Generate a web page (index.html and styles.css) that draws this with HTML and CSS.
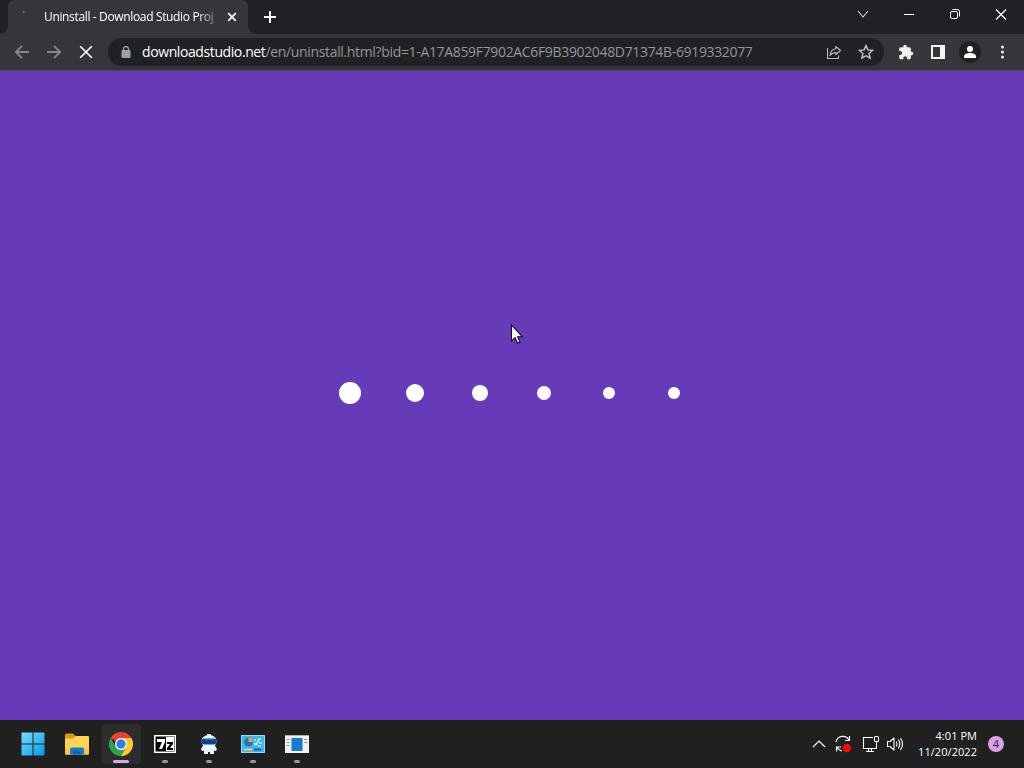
FILE: index.html
```html
<!DOCTYPE html>
<html lang="en">
<head>
  <meta charset="UTF-8">
  <meta name="viewport" content="width=device-width, initial-scale=1.0">
  <title>Uninstall - Download Studio Proj</title>
  <link rel="stylesheet" href="styles.css">
</head>
<body>

  <!-- Tab strip -->
  <div class="tab-strip">
    <div class="tab">
      <svg class="tab-spinner" width="16" height="16" viewBox="0 0 16 16"><path d="M7.3 3.2l1-.5" stroke="#9fa8b5" stroke-width="1.6"/></svg>
      <span class="tab-title">Uninstall - Download Studio Proj</span>
      <svg class="tab-close" width="10" height="10" viewBox="0 0 10 10"><path d="M1.2 1.2l7.6 7.6M8.8 1.2L1.2 8.8" stroke="#fff" stroke-width="1.7"/></svg>
    </div>
    <svg class="new-tab" width="14" height="14" viewBox="0 0 14 14"><path d="M7 1v12M1 7h12" stroke="#fff" stroke-width="2"/></svg>
    <div class="window-buttons">
      <svg width="46" height="28" viewBox="0 0 46 28"><path d="M18 11l5 6 5-6" fill="none" stroke="#ddd" stroke-width="1.1"/></svg>
      <svg width="46" height="28" viewBox="0 0 46 28"><path d="M18 14.5h10" stroke="#fff"/></svg>
      <svg width="46" height="28" viewBox="0 0 46 28" fill="none" stroke="#fff"><rect x="18.5" y="11.5" width="7" height="7" rx="1.5"/><path d="M20.5 9.5h5q2 0 2 2v5"/></svg>
      <svg width="46" height="28" viewBox="0 0 46 28"><path d="M18 9.5l10 10M28 9.5l-10 10" stroke="#fff" stroke-width="1.2"/></svg>
    </div>
  </div>

  <!-- Toolbar -->
  <div class="toolbar">
    <div class="nav-buttons">
      <svg width="16" height="16" viewBox="0 0 16 16"><path d="M15 8H2M8 1.8L1.8 8 8 14.2" fill="none" stroke="#85878a" stroke-width="1.8"/></svg>
      <svg width="16" height="16" viewBox="0 0 16 16"><path d="M1 8h13M8 1.8L14.2 8 8 14.2" fill="none" stroke="#85878a" stroke-width="1.8"/></svg>
      <svg width="16" height="16" viewBox="0 0 16 16"><path d="M2.2 2.2l11.6 11.6M13.8 2.2L2.2 13.8" stroke="#fff" stroke-width="1.6"/></svg>
    </div>
    <div class="address-bar">
      <svg class="lock" width="10" height="12" viewBox="0 0 10 12"><rect x=".5" y="4" width="9" height="8" rx="1.2" fill="#9aa0a6"/><path d="M2.5 5V3a2.5 2.5 0 0 1 5 0v2" fill="none" stroke="#9aa0a6" stroke-width="1.3"/></svg>
      <span class="url"><span class="host">downloadstudio.net</span><span class="path">/en/uninstall.html?bid=1-A17A859F7902AC6F9B3902048D71374B-6919332077</span></span>
      <div class="address-icons">
        <svg width="16" height="16" viewBox="0 0 16 16" fill="none" stroke="#b9bcc0" stroke-width="1.1"><path d="M1.5 4v10.500h11V11.5"/><path d="M9.800 2.500l4.700 4-4.700 4V8.500C7 8.500 5.500 9.500 4 11.500 4.500 7.500 6.500 5 9.800 4.700z" stroke-linejoin="round"/></svg>
        <svg width="16" height="16" viewBox="0 0 16 16"><path d="M8 1.600l1.900 4.300 4.700.5-3.500 3.100 1 4.600L8 11.700l-4.100 2.400 1-4.600L1.400 6.400l4.700-.5z" fill="none" stroke="#c4c7ca" stroke-width="1.400"/></svg>
      </div>
    </div>
    <div class="browser-actions">
      <svg width="18" height="18" viewBox="0 0 24 24"><path d="M19.500 11.500H18.500V7.500a2 2 0 0 0-2-2h-3.500V4.500a2.300 2.300 0 0 0-4.600 0v1H5a2 2 0 0 0-2 2v3.300h1.200a2.600 2.600 0 0 1 0 5.200H3V19.500a2 2 0 0 0 2 2h3.300v-1.200a2.600 2.600 0 0 1 5.200 0v1.200h3a2 2 0 0 0 2-2v-3.300h1a2.350 2.350 0 0 0 0-4.700z" fill="#eff0f1"/></svg>
      <svg width="16" height="16" viewBox="0 0 16 16"><path d="M1 1h14v14H1zM3 3v10h7V3z" fill="#f4f4f5" fill-rule="evenodd"/></svg>
      <span class="avatar"><svg width="14" height="14" viewBox="0 0 14 14" fill="#fff"><circle cx="7" cy="4" r="3"/><path d="M1 13v-1.500C1 9 4 8 7 8s6 1 6 3.500V13z"/></svg></span>
      <svg width="16" height="16" viewBox="0 0 16 16" fill="#eee"><circle cx="8.500" cy="3" r="1.500"/><circle cx="8.500" cy="8" r="1.500"/><circle cx="8.500" cy="13" r="1.500"/></svg>
    </div>
  </div>

  <!-- Page with the loading dots -->
  <div class="page">
    <div class="loader">
      <span class="dot dot-1"></span>
      <span class="dot dot-2"></span>
      <span class="dot dot-3"></span>
      <span class="dot dot-4"></span>
      <span class="dot dot-5"></span>
      <span class="dot dot-6"></span>
    </div>
    <svg class="cursor" width="14" height="21" viewBox="0 0 14 21"><path d="M1.500 1v16l3.600-3.300 2.500 5.600 2.500-1.100-2.500-5.400h4.800z" fill="#fff" stroke="#160a2c" stroke-width="1.100"/></svg>
  </div>

  <!-- Taskbar -->
  <div class="taskbar">
    <div class="apps">
      <div class="app">
        <svg width="24" height="24" viewBox="0 0 24 24">
          <defs><linearGradient id="win" x1="0" y1="0" x2="24" y2="24" gradientUnits="userSpaceOnUse"><stop offset="0" stop-color="#78e0fb"/><stop offset="1" stop-color="#0a94e8"/></linearGradient></defs>
          <path d="M1 .5h10.500V11.500H.5V1zM12.500.5H23l.5.5v10.500h-11zM.5 12.500h11v11H1l-.5-.5zM12.500 12.500h11V23l-.5.5H12.500z" fill="url(#win)"/>
        </svg>
      </div>
      <div class="app">
        <svg width="26" height="24" viewBox="0 0 26 24">
          <path d="M1 3q0-1.500 1.500-1.500H9l3 3v4H1z" fill="#d99a18"/>
          <path d="M1 6.500h8l3-2.500h12q1 0 1 1v16.500q0 1-1 1H2q-1 0-1-1z" fill="#ffd35a"/>
          <path d="M1 16h24v5.500q0 1-1 1H2q-1 0-1-1z" fill="#fbc544"/>
          <path d="M6 22.500v-5q0-2 2-2h10q2 0 2 2v5z" fill="#147bc6"/>
          <path d="M9 19h8v3.500H9z" fill="#0b66ac"/>
        </svg>
      </div>
      <div class="app active">
        <svg width="24" height="24" viewBox="0 0 24 24">
          <path d="M12 12L1.600 6A12 12 0 0 1 22.400 6z" fill="#e54335"/>
          <path d="M12 12L22.400 6A12 12 0 0 1 12 24z" fill="#fcc934"/>
          <path d="M12 6h10.400L17.200 15 12 24z" fill="#fcc934"/>
          <path d="M6.800 15L1.600 6A12 12 0 0 0 12 24l5.200-9-5.200 3z" fill="#2da44e"/>
          <circle cx="12" cy="12" r="6" fill="#fff"/>
          <circle cx="12" cy="12" r="4.700" fill="#327be8"/>
        </svg>
        <span class="indicator"></span>
      </div>
      <div class="app">
        <svg width="22" height="18" viewBox="0 0 22 18">
          <rect width="22" height="18" fill="#fff"/>
          <rect x="1.500" y="1.500" width="19" height="15" fill="#050505"/>
          <path d="M12 2h8v14h-8z" fill="#fff"/>
          <path d="M3 4h8v3L8 14H5l3-7H3z" fill="#fff"/>
          <path d="M13 7h6v2l-3 4h3v2h-6v-2l3-4h-3z" fill="#050505"/>
        </svg>
        <span class="indicator"></span>
      </div>
      <div class="app">
        <svg width="18" height="22" viewBox="0 0 18 22">
          <path d="M7 3V1h4v2" fill="#b3d5f7"/>
          <path d="M4 11h10l3 5-1 2-2-.5V21h-4v-2H8v2H4v-3.500L2 18l-1-2z" fill="#eaf4ff"/>
          <path d="M9 2C4 2 1.500 5 1.500 8.500S5 14.500 9 14.500s7.500-2.500 7.500-6S14 2 9 2z" fill="#f3f8ff"/>
          <rect x="1.500" y="5.500" width="15" height="6" rx="3" fill="#0b3d94"/>
          <path d="M5 7q4-1.500 8 0" fill="none" stroke="#2a73d0"/>
        </svg>
        <span class="indicator"></span>
      </div>
      <div class="app">
        <svg width="24" height="18" viewBox="0 0 24 18">
          <rect x=".5" y=".5" width="23" height="17" fill="#43b4e5" stroke="#9bd8f2"/>
          <circle cx="7.500" cy="7" r="4.500" fill="#167ab4"/>
          <path d="M7.500 7V2.500A4.500 4.500 0 0 1 12 7z" fill="#f8a044"/>
          <path d="M13 5h2M13 8l2 2 3-6h2M18 8h3M17 11h3" stroke="#e9faff" stroke-width="1.200" fill="none"/>
          <path d="M3 14.500h8" stroke="#f6c16d" stroke-width="2"/>
          <path d="M13 14.500h7" stroke="#14689d" stroke-width="2"/>
        </svg>
        <span class="indicator"></span>
      </div>
      <div class="app">
        <svg width="24" height="18" viewBox="0 0 24 18">
          <rect width="24" height="18" fill="#f0f1f2"/>
          <path d="M0 .5h24" stroke="#aeb3b8"/>
          <rect x="6.500" y="3" width="11" height="13" fill="#187bc9"/>
          <path d="M1.500 4.500h3M1.500 7.500h3M1.500 10.500h3M19 4.500h3.500M19 7.500h3.500" stroke="#969ba0"/>
        </svg>
        <span class="indicator"></span>
      </div>
    </div>
    <div class="tray">
      <svg class="chevron" width="14" height="8" viewBox="0 0 14 8"><path d="M1 7l6-6 6 6" fill="none" stroke="#fff" stroke-width="1.200"/></svg>
      <svg class="update" width="18" height="18" viewBox="0 0 18 18">
        <path d="M2 7a7 7 0 0 1 13-2M15.500 1v4.500H11M2.500 16.500V12H7M3 12.500a7 7 0 0 0 5 3.500" fill="none" stroke="#fff" stroke-width="1.200"/>
        <circle cx="13" cy="13" r="4.200" fill="#f50808"/>
      </svg>
      <svg class="network" width="18" height="18" viewBox="0 0 18 18" fill="none" stroke="#fff" stroke-width="1.100"><path d="M11 2.500H1.500v11H14.500V9M4 16.500h8M6.500 13.500v3M9.500 13.500v3M14.500 6v4"/><rect x="12.500" y="1.500" width="4" height="5" rx="1"/></svg>
      <svg class="volume" width="18" height="16" viewBox="0 0 18 16" fill="none" stroke="#fff" stroke-width="1.100"><path d="M1.500 5.500h2.500L8 2v12L4 10.500H1.500z" stroke-linejoin="round"/><path d="M10.200 5.500q1.600 2.500 0 5M12.300 3.500q3 4.500 0 9M14.500 2q4 6 0 12"/></svg>
      <div class="clock">
        <div class="time">4:01 PM</div>
        <div class="date">11/20/2022</div>
      </div>
      <span class="badge">4</span>
    </div>
  </div>

</body>
</html>
```
FILE: styles.css
```css
* {
  box-sizing: border-box;
}

body {
  margin: 0;
  width: 1024px;
  height: 768px;
  overflow: hidden;
  display: flex;
  flex-direction: column;
  font-family: "Open Sans", "Noto Sans", sans-serif;
  color: #fff;
}

svg {
  display: block;
  flex: none;
}

/* Tab strip */
.tab-strip {
  height: 34px;
  flex: none;
  display: flex;
  background-color: #202124;
  padding-left: 8px;
}

.tab {
  position: relative;
  width: 240px;
  display: flex;
  align-items: center;
  padding: 0 11px 0 8px;
  background-color: #35363a;
  border-radius: 6px 6px 0 0;
}

/* Curved feet on both sides of the tab */
.tab::before,
.tab::after {
  content: "";
  position: absolute;
  bottom: 0;
  width: 8px;
  height: 8px;
}

.tab::before {
  left: -8px;
  background: radial-gradient(circle at 0 0, transparent 7.5px, #35363a 8px);
}

.tab::after {
  right: -8px;
  background: radial-gradient(circle at 100% 0, transparent 7.5px, #35363a 8px);
}

.tab-title {
  width: 174px;
  margin: 0 9px 0 12px;
  white-space: nowrap;
  font-size: 12px;
  line-height: 18px;
  letter-spacing: -0.35px;
  -webkit-mask-image: linear-gradient(to right, #000 154px, transparent 178px);
  mask-image: linear-gradient(to right, #000 154px, transparent 178px);
}

.new-tab {
  margin: 10px 0 0 15px;
}

.window-buttons {
  display: flex;
  margin-left: auto;
}

/* Toolbar */
.toolbar {
  height: 37px;
  flex: none;
  display: flex;
  align-items: center;
  padding: 0 14px;
  background-color: #35363a;
  border-bottom: 1px solid #4b4552;
}

.nav-buttons {
  display: flex;
  gap: 16px;
}

.address-bar {
  width: 776px;
  height: 28px;
  margin-left: 14px;
  display: flex;
  align-items: center;
  padding: 0 10px 0 13px;
  border-radius: 14px;
  background-color: #202124;
}

.url {
  margin-left: 11px;
  white-space: nowrap;
  font-size: 14px;
  line-height: 20px;
}

.host {
  letter-spacing: -0.4px;
}

.path {
  color: #92969a;
  letter-spacing: -0.34px;
}

.address-icons {
  display: flex;
  gap: 16px;
  margin-left: auto;
}

.browser-actions {
  display: flex;
  align-items: center;
  margin-left: 13px;
  gap: 15px;
}

.avatar {
  width: 22px;
  height: 22px;
  margin: 0 -2px 0 -2px;
  display: flex;
  align-items: center;
  justify-content: center;
  border-radius: 50%;
  background-color: #202124;
}

/* Page */
.page {
  position: relative;
  flex: 1;
  display: flex;
  justify-content: center;
  background-color: #673ab7;
}

.loader {
  height: 22px;
  margin: 311px 0 0;
  display: grid;
  grid-template-columns: repeat(6, 64.8px);
  align-items: center;
  justify-items: center;
}

.dot {
  width: 12px;
  height: 12px;
  border-radius: 50%;
  background-color: #fff;
}

.dot-1 {
  width: 22px;
  height: 22px;
}

.dot-2 {
  width: 18px;
  height: 18px;
}

.dot-3 {
  width: 16px;
  height: 16px;
}

.dot-4 {
  width: 14px;
  height: 14px;
}

/* Mouse pointer over the page */
.cursor {
  position: absolute;
  left: 510px;
  top: 253px;
}

/* Taskbar */
.taskbar {
  height: 48px;
  flex: none;
  display: flex;
  justify-content: space-between;
  background-color: #202020;
}

.apps {
  display: flex;
  align-items: center;
  gap: 4px;
  padding-left: 13px;
}

.app {
  position: relative;
  width: 40px;
  height: 40px;
  display: flex;
  align-items: center;
  justify-content: center;
  border-radius: 4px;
}

.app.active {
  background-color: #2d2d2f;
}

.indicator {
  position: absolute;
  left: 17px;
  bottom: 1px;
  width: 6px;
  height: 3px;
  border-radius: 2px;
  background-color: #9a9a9a;
}

.active .indicator {
  left: 12px;
  width: 16px;
  background-color: #d8a5e8;
}

.tray {
  display: flex;
  align-items: center;
  padding-right: 20px;
}

.update {
  margin-left: 8px;
}

.network {
  margin-left: 10px;
}

.volume {
  margin-left: 6px;
}

.clock {
  width: 73px;
  text-align: right;
  font-size: 11px;
  line-height: 16px;
  letter-spacing: 0.05px;
}

.badge {
  width: 16px;
  height: 16px;
  margin-left: 11px;
  border-radius: 50%;
  background-color: #d9a0e6;
  color: #30203a;
  font-size: 11px;
  line-height: 16px;
  text-align: center;
}
```
